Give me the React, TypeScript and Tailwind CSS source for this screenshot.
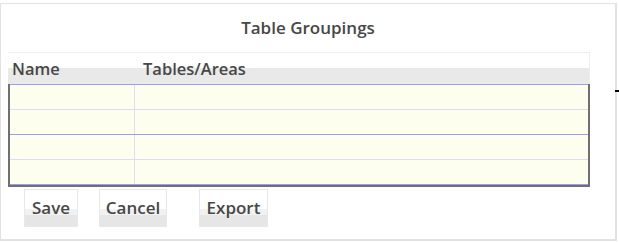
import React from "react"

const rows = [
	{ line: "border-[#9c9cf4]" },
	{ line: "border-[#dedcf4]" },
	{ line: "border-[#9c9cf4]" },
	{ line: "border-[#dedcf4]" },
]

function ToolButton({ label, width }: { label: string; width: string }) {
	return (
		<button
			className={`${width} h-[38px] border border-[#e8e8e8] bg-[linear-gradient(to_bottom,#ffffff_52%,#f1f1f1_52%,#f1f1f1_70%,#e6e6e6_70%)] text-[17px] font-semibold text-[#474747]`}
		>
			{label}
		</button>
	)
}

export default function App() {
	return (
		<div
			className="w-[619px] h-[243px] bg-white pt-[3px]"
			style={{ fontFamily: '"Open Sans", "Liberation Sans", sans-serif' }}
		>
			<div className="w-[617px] h-[238px] border-l border-t border-r-2 border-b-2 border-[#e2e2e2] flex flex-col">
				<div className="h-[48px] flex items-center justify-center text-[17px] font-semibold text-[#474747]">
					Table Groupings
				</div>
				<div className="ml-[7px] w-[582px]">
					<div className="h-[32px] border-t border-r border-[#eeeeee] bg-[linear-gradient(to_bottom,#ffffff_50%,#e9e9e9_50%)] flex items-end pb-[5px] leading-[20px] text-[16.5px] font-semibold text-[#474747]">
						<div className="w-[126px] pl-[4px]">Name</div>
						<div className="pl-[9px]">Tables/Areas</div>
					</div>
					<div className="border-l-2 border-r-2 border-b-2 border-[#707070] bg-[#fefeef]">
						{rows.map((r, i) => (
							<div key={i} className={`h-[25px] flex border-t ${r.line}`}>
								<div className="w-[125px] border-r border-[#dcdcf6]" />
								<div className="flex-1" />
							</div>
						))}
						<div className="border-t border-[#9c9cf4]" />
					</div>
				</div>
				<div className="mt-[2px] ml-[23px] flex">
					<ToolButton label="Save" width="w-[54px]" />
					<div className="w-[21px]" />
					<ToolButton label="Cancel" width="w-[68px]" />
					<div className="w-[32px]" />
					<ToolButton label="Export" width="w-[69px]" />
				</div>
			</div>
			<div className="relative">
				<div className="absolute left-[615px] top-[-151px] w-[4px] h-[2px] bg-black" />
			</div>
		</div>
	)
}
